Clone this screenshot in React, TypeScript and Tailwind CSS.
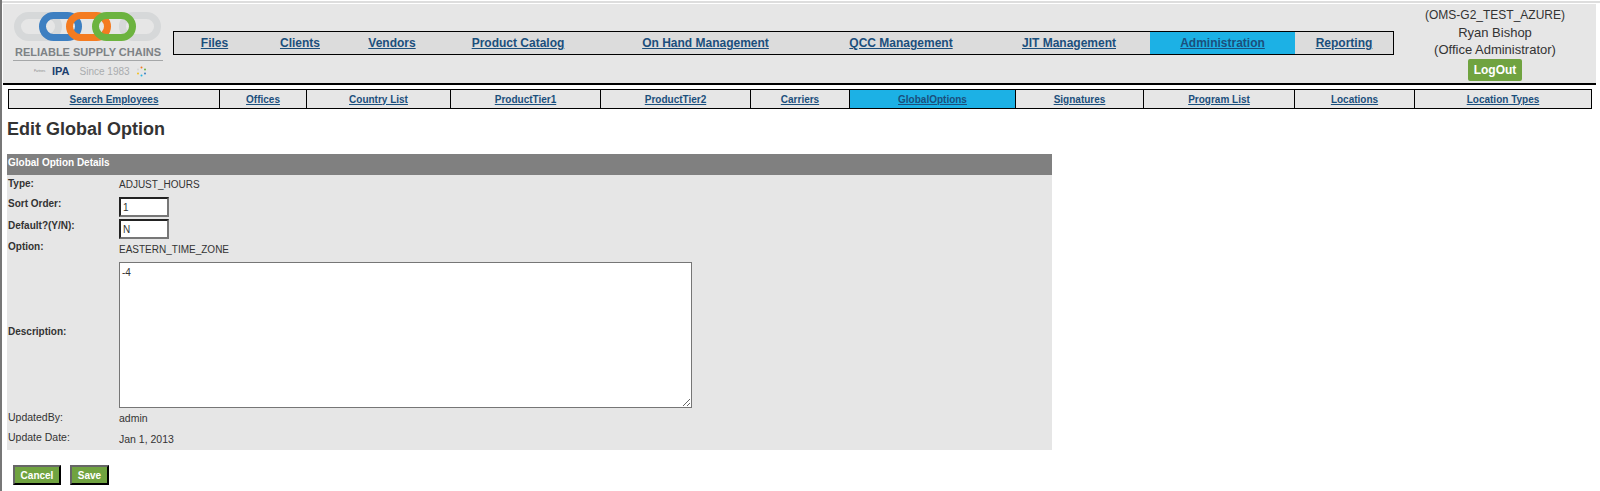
import React from 'react'

const mainNav = [
  { label: 'Files', w: 81 },
  { label: 'Clients', w: 90 },
  { label: 'Vendors', w: 94 },
  { label: 'Product Catalog', w: 158 },
  { label: 'On Hand Management', w: 217 },
  { label: 'QCC Management', w: 174 },
  { label: 'JIT Management', w: 162 },
  { label: 'Administration', w: 145, active: true },
  { label: 'Reporting', w: 98 },
]

const subNav = [
  { label: 'Search Employees', w: 211 },
  { label: 'Offices', w: 87 },
  { label: 'Country List', w: 144 },
  { label: 'ProductTier1', w: 150 },
  { label: 'ProductTier2', w: 150 },
  { label: 'Carriers', w: 99 },
  { label: 'GlobalOptions', w: 166, active: true },
  { label: 'Signatures', w: 128 },
  { label: 'Program List', w: 151 },
  { label: 'Locations', w: 120 },
  { label: 'Location Types', w: 176 },
]

function Logo() {
  return (
    <div className="w-[170px] shrink-0 flex flex-col items-center">
      <svg width="150" height="30" viewBox="0 0 150 30" className="mt-[8px]">
        <rect x="4.5" y="3.5" width="41" height="22" rx="11" fill="none" stroke="#d6d8d9" strokeWidth="7" />
        <rect x="109.5" y="3.5" width="35" height="22" rx="11" fill="none" stroke="#d6d8d9" strokeWidth="7" />
        <rect x="29.5" y="3.5" width="36" height="22" rx="11" fill="none" stroke="#3d7fc1" strokeWidth="7" />
        <rect x="56.5" y="3.5" width="38" height="22" rx="11" fill="none" stroke="#f47b20" strokeWidth="7" />
        <rect x="82.5" y="3.5" width="37" height="22" rx="11" fill="none" stroke="#6cb33f" strokeWidth="7" />
      </svg>
      <div className="mt-[3px] text-[11px] leading-[14px] font-bold text-[#7d8285] whitespace-nowrap">RELIABLE SUPPLY CHAINS</div>
      <div className="w-[150px] h-[1px] bg-[#a5a7a8] mt-[1px]" />
      <div className="w-[150px] pl-[21px] flex items-center mt-[2px] h-[16px]">
        <span className="w-[18px] text-[3px] text-[#888]">Partners</span>
        <span className="text-[11px] font-bold text-[#1d3f6e] mr-[10px]">IPA</span>
        <span className="text-[10px] text-[#a9acae] mr-[6px]">Since 1983</span>
        <svg width="11" height="11" viewBox="0 0 11 11">
          <circle cx="5.5" cy="1.5" r="1" fill="#f47b20" />
          <circle cx="9" cy="3.5" r="1" fill="#6cb33f" />
          <circle cx="9" cy="7.5" r="1" fill="#3d7fc1" />
          <circle cx="5.5" cy="9.5" r="1" fill="#27b5e5" />
          <circle cx="2" cy="7.5" r="1" fill="#f4c020" />
          <circle cx="2" cy="3.5" r="1" fill="#d3d5d6" />
        </svg>
      </div>
    </div>
  )
}

function FormRow({ label, h, children, labelClass = 'font-bold text-[10px]' }: { label: string; h: number; children: React.ReactNode; labelClass?: string }) {
  return (
    <div className="flex items-center" style={{ height: h }}>
      <div className={`w-[112px] pl-[1px] shrink-0 text-[#333] ${labelClass}`}>{label}</div>
      <div className="text-[10px] text-[#333]">{children}</div>
    </div>
  )
}

export default function App() {
  return (
    <div className="h-[491px] overflow-hidden bg-white border-l-2 border-[#777] pt-[1px] font-['Liberation_Sans',Arial,sans-serif]">
      <div className="h-[2px] bg-[#ddd] -ml-[2px]" />
      <div className="h-[1px]" />

      <header className="ml-[1px] mr-[4px] h-[81px] bg-[#e6e6e6] border-b-2 border-black flex">
        <Logo />
        <div className="flex h-[24px] mt-[27px] bg-[#dcdcdc] border border-black">
          {mainNav.map((item) => (
            <a
              key={item.label}
              href="#"
              style={{ width: item.w }}
              className={`flex items-center justify-center text-[12px] font-bold underline text-[#1b4f7c] ${item.active ? 'bg-[#1cb1e5]' : ''}`}
            >
              {item.label}
            </a>
          ))}
        </div>
        <div className="ml-[1px] w-[200px] flex flex-col items-center pt-[3px] text-[13px] leading-[17px] text-[#333]">
          <div className="text-[12px]">(OMS-G2_TEST_AZURE)</div>
          <div>Ryan Bishop</div>
          <div>(Office Administrator)</div>
          <button className="mt-[1px] w-[54px] h-[22px] rounded-[2px] bg-[#70a340] text-white text-[12px] font-bold">LogOut</button>
        </div>
      </header>

      <nav className="ml-[6px] mt-[4px] w-[1584px] h-[20px] flex border border-black bg-[#e6e6e6]">
        {subNav.map((item, i) => (
          <a
            key={item.label}
            href="#"
            style={{ width: item.w }}
            className={`flex items-center justify-center text-[10px] font-bold underline text-[#1b4f7c] ${i < subNav.length - 1 ? 'border-r border-black' : ''} ${item.active ? 'bg-[#1cb1e5]' : ''}`}
          >
            {item.label}
          </a>
        ))}
      </nav>

      <h1 className="ml-[5px] mt-[9px] text-[18px] leading-[22px] font-bold text-[#333]">Edit Global Option</h1>

      <section className="ml-[5px] mt-[14px] w-[1045px] h-[296px] bg-[#e6e6e6]">
        <div className="h-[21px] bg-[#808080] pl-[1px] pb-[4px] flex items-center text-[10px] font-bold text-white">Global Option Details</div>
        <FormRow label="Type:" h={21} labelClass="font-bold text-[10px] pb-[5px]">
          <span className="block pb-[2px]">ADJUST_HOURS</span>
        </FormRow>
        <FormRow label="Sort Order:" h={22} labelClass="font-bold text-[10px] pb-[8px]">
          <input
            defaultValue="1"
            className="block w-[50px] h-[20px] bg-white border-2 border-t-[#222] border-l-[#222] border-b-[#777] border-r-[#777] px-[2px] text-[10px] text-[#333]"
          />
        </FormRow>
        <FormRow label="Default?(Y/N):" h={22} labelClass="font-bold text-[10px] pb-[8px]">
          <input
            defaultValue="N"
            className="block w-[50px] h-[20px] bg-white border-2 border-t-[#222] border-l-[#222] border-b-[#777] border-r-[#777] px-[2px] text-[10px] text-[#333]"
          />
        </FormRow>
        <FormRow label="Option:" h={16} labelClass="font-bold text-[10px] pb-[3px]">
          <span className="block pt-[3px]">EASTERN_TIME_ZONE</span>
        </FormRow>
        <div className="pt-[6px] flex items-center">
          <div className="w-[112px] pl-[1px] pb-[8px] shrink-0 text-[10px] font-bold text-[#333]">Description:</div>
          <textarea
            defaultValue="-4"
            className="block w-[573px] h-[146px] bg-white border border-[#767676] p-[2px] text-[10px] text-[#333]"
          />
        </div>
        <FormRow label="UpdatedBy:" h={22} labelClass="text-[10.5px] font-medium pb-[2px]">
          <span className="text-[10.5px]">admin</span>
        </FormRow>
        <FormRow label="Update Date:" h={20} labelClass="text-[10.5px] font-medium pb-[4px]">
          <span className="text-[10.5px]">Jan 1, 2013</span>
        </FormRow>
      </section>

      <div className="ml-[11px] mt-[15px] flex gap-[9px]">
        <button className="w-[48px] h-[20px] bg-[#70a340] border-2 border-t-[#666] border-l-[#666] border-b-black border-r-black text-white text-[10px] font-bold">Cancel</button>
        <button className="w-[39px] h-[20px] bg-[#70a340] border-2 border-t-[#666] border-l-[#666] border-b-black border-r-black text-white text-[10px] font-bold">Save</button>
      </div>
    </div>
  )
}
